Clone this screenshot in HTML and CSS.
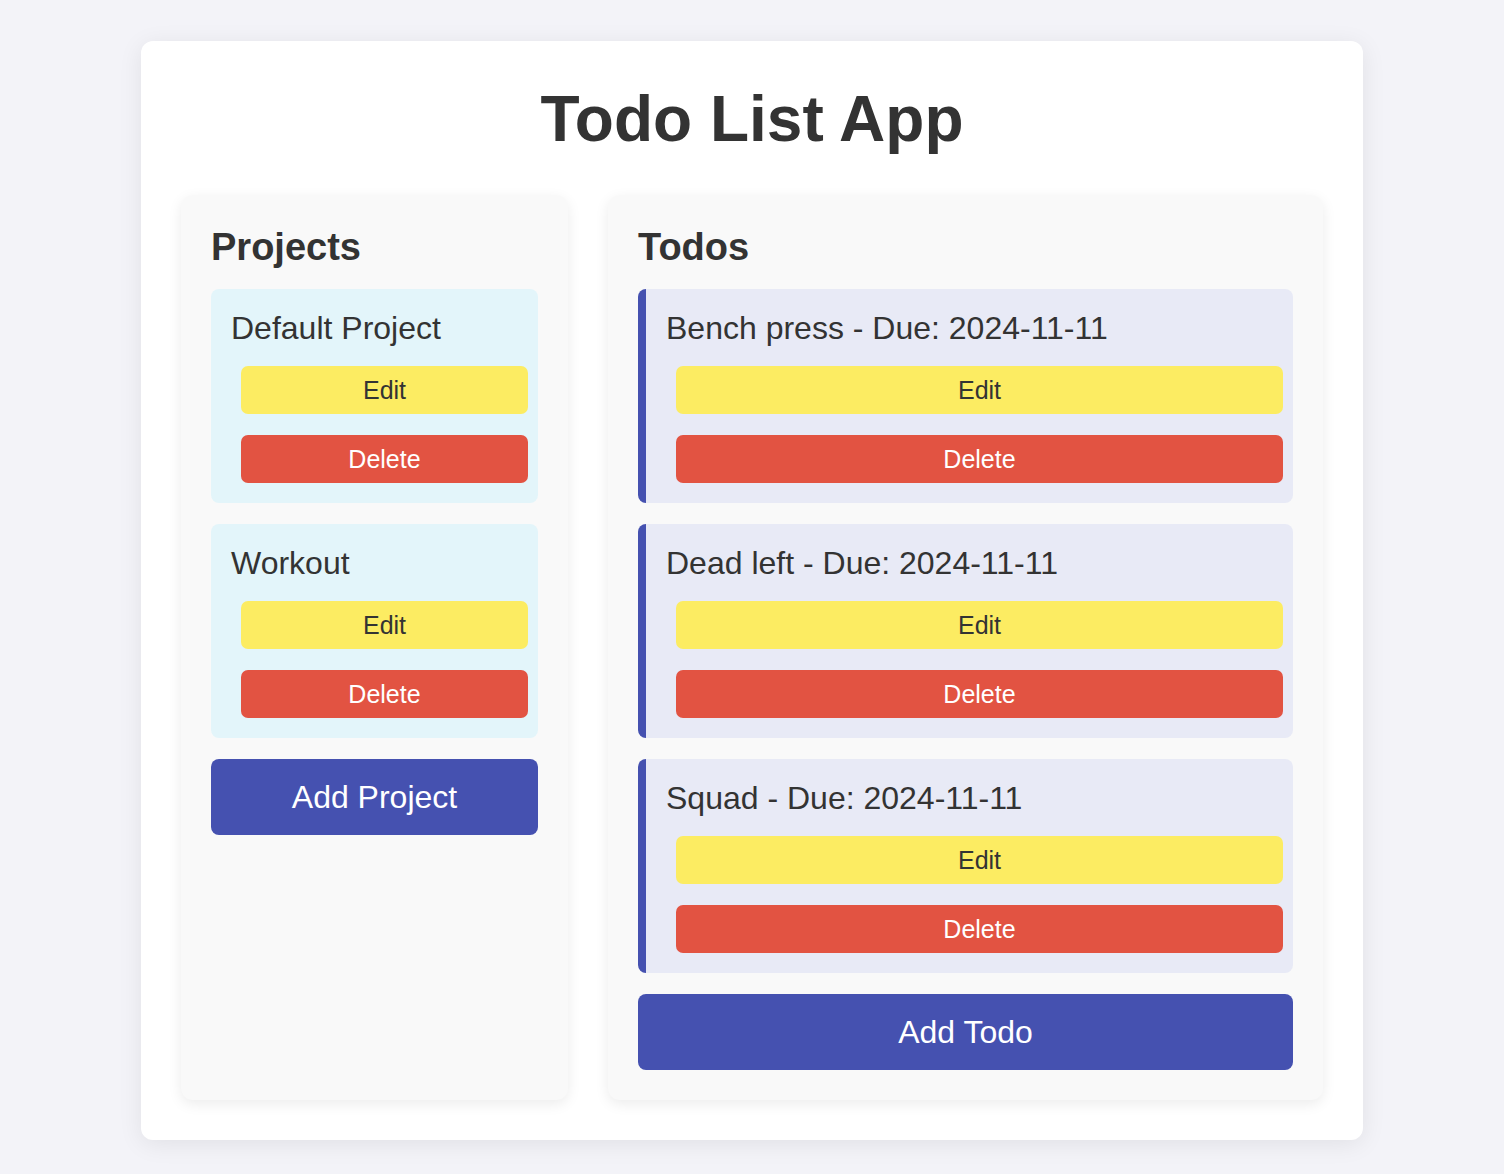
FILE: index.html
```html
<!DOCTYPE html>
<html lang="en">
<head>
<meta charset="utf-8">
<title>Todo List App</title>
<link rel="stylesheet" href="styles.css">
</head>
<body>
<div class="app">
  <h1 class="app-title">Todo List App</h1>
  <div class="columns">
    <section class="panel">
      <h2 class="panel-title">Projects</h2>
      <div class="list">
        <div class="card project">
          <span class="card-title">Default Project</span>
          <button class="btn btn-edit">Edit</button>
          <button class="btn btn-delete">Delete</button>
        </div>
        <div class="card project">
          <span class="card-title">Workout</span>
          <button class="btn btn-edit">Edit</button>
          <button class="btn btn-delete">Delete</button>
        </div>
        <button class="btn-add">Add Project</button>
      </div>
    </section>
    <section class="panel">
      <h2 class="panel-title">Todos</h2>
      <div class="list">
        <div class="card todo">
          <span class="card-title">Bench press - Due: 2024-11-11</span>
          <button class="btn btn-edit">Edit</button>
          <button class="btn btn-delete">Delete</button>
        </div>
        <div class="card todo">
          <span class="card-title">Dead left - Due: 2024-11-11</span>
          <button class="btn btn-edit">Edit</button>
          <button class="btn btn-delete">Delete</button>
        </div>
        <div class="card todo">
          <span class="card-title">Squad - Due: 2024-11-11</span>
          <button class="btn btn-edit">Edit</button>
          <button class="btn btn-delete">Delete</button>
        </div>
        <button class="btn-add">Add Todo</button>
      </div>
    </section>
  </div>
</div>
</body>
</html>
```

FILE: styles.css
```css
* { box-sizing: border-box; }

html, body {
  margin: 0;
  padding: 0;
}

body {
  background: #f3f3f8;
  font-family: "Liberation Sans", Arial, Helvetica, sans-serif;
  color: #333333;
}

.app {
  width: 1222px;
  margin: 41px auto 33px;
  background: #ffffff;
  border-radius: 12px;
  box-shadow: 0 4px 24px rgba(0, 0, 0, 0.08);
  padding: 41px 40px 40px;
}

.app-title {
  margin: 0 0 39px;
  text-align: center;
  font-size: 64px;
  font-weight: bold;
  line-height: normal;
  color: #333333;
}

.columns {
  display: grid;
  grid-template-columns: 387px 715px;
  column-gap: 40px;
  align-items: stretch;
}

.panel {
  background: #f9f9f9;
  border-radius: 12px;
  padding: 30px;
  box-shadow: 0 4px 14px rgba(0, 0, 0, 0.08);
}

.panel-title {
  margin: 0 0 20px;
  font-size: 38px;
  font-weight: bold;
  line-height: 44px;
  color: #333333;
}

.list {
  display: flex;
  flex-direction: column;
  gap: 21px;
}

.card {
  display: flex;
  flex-direction: column;
  align-items: flex-start;
  padding: 20px;
  border-radius: 8px;
}

.project {
  background: #e3f5fa;
}

.todo {
  background: #e8eaf6;
  border-left: 8px solid #4551b0;
}

.card-title {
  font-size: 32px;
  line-height: 34px;
  color: #333333;
  margin: 2px 0 21px;
}

.btn {
  width: 100%;
  height: 48px;
  margin: 0 -10px 0 10px;
  border: none;
  border-radius: 7px;
  font-family: "Liberation Sans", Arial, Helvetica, sans-serif;
  font-size: 25px;
  line-height: 48px;
  padding: 0;
  text-align: center;
}

.btn + .btn {
  margin-top: 21px;
}

.btn-edit {
  background: #fcec62;
  color: #333333;
}

.btn-delete {
  background: #e25342;
  color: #ffffff;
}

.btn-add {
  width: 100%;
  height: 76px;
  border: none;
  border-radius: 8px;
  background: #4551b0;
  color: #ffffff;
  font-family: "Liberation Sans", Arial, Helvetica, sans-serif;
  font-size: 32px;
  padding: 0;
}
```
